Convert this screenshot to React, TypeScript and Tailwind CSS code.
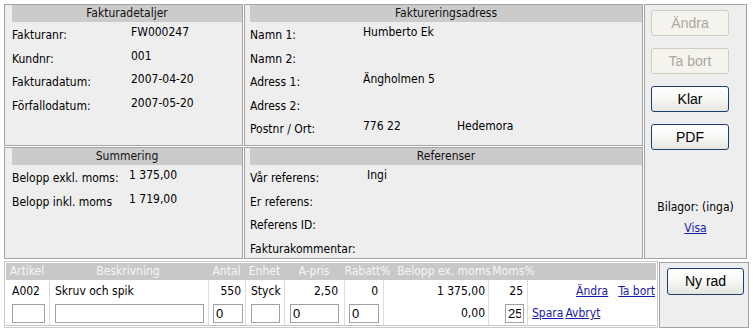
import React from 'react';

const sans = "font-['DejaVu_Sans_Condensed','DejaVu_Sans',sans-serif]";
const arial = "font-['Liberation_Sans',Arial,sans-serif]";

interface PanelProps {
    title: string;
    className?: string;
    children?: React.ReactNode;
}

function Panel({ title, className = '', children }: PanelProps) {
    return (
        <div className={`flex flex-col border border-[#a3a3a3] bg-[#eeeeee] ${className}`}>
            <div className="h-[17px] bg-[#cbcbcb] text-center leading-[17px] text-[#111]">{title}</div>
            <div className="flex flex-col pt-[2px]">{children}</div>
        </div>
    );
}

interface RowProps {
    label: string;
    value?: string;
    extra?: string;
    labelW: string;
    valueW?: string;
}

function Row({ label, value, extra, labelW, valueW = '' }: RowProps) {
    return (
        <div className="flex h-[23.5px] items-start whitespace-nowrap">
            <span className={`${labelW} shrink-0 leading-[23px]`}>{label}</span>
            {value && <span className={`${valueW} shrink-0 leading-[17px]`}>{value}</span>}
            {extra && <span className="leading-[17px]">{extra}</span>}
        </div>
    );
}

function XpButton({ label, disabled, className = '' }: { label: string; disabled?: boolean; className?: string }) {
    return (
        <button
            disabled={disabled}
            className={`${arial} flex items-center justify-center rounded-[3px] border text-[14px] ${
                disabled
                    ? 'border-[#cfcdc0] bg-[#f4f3ee] text-[#aca899]'
                    : 'border-[#1c3f6e] bg-gradient-to-b from-white via-[#f7f7f4] to-[#e6e5df] text-black'
            } ${className}`}
        >
            {label}
        </button>
    );
}

function Input({ value = '', className = '' }: { value?: string; className?: string }) {
    return (
        <input
            readOnly
            value={value}
            className={`${arial} h-[19px] border border-[#9aa3ab] bg-white px-[2px] text-[13px] leading-[17px] text-black outline-none ${className}`}
        />
    );
}

function Link({ children }: { children: React.ReactNode }) {
    return <a className="cursor-pointer text-[#1a1aa8] underline">{children}</a>;
}

export default function App() {
    return (
        <div className={`${sans} h-[329px] w-[753px] overflow-hidden bg-white pl-[4px] pt-[4px] text-[12px] text-black`}>
            {/* top area */}
            <div className="flex h-[255px] gap-[1px]">
                <div className="grid grid-cols-[239px_399px] grid-rows-[142px_112px] gap-[1px]">
                    <Panel title="Fakturadetaljer" className="pl-[7px]">
                        <Row label="Fakturanr:" value="FW000247" labelW="w-[119px]" />
                        <Row label="Kundnr:" value="001" labelW="w-[119px]" />
                        <Row label="Fakturadatum:" value="2007-04-20" labelW="w-[119px]" />
                        <Row label="Förfallodatum:" value="2007-05-20" labelW="w-[119px]" />
                    </Panel>
                    <Panel title="Faktureringsadress" className="pl-[5px]">
                        <Row label="Namn 1:" value="Humberto Ek" labelW="w-[113px]" />
                        <Row label="Namn 2:" labelW="w-[113px]" />
                        <Row label="Adress 1:" value="Ängholmen 5" labelW="w-[113px]" />
                        <Row label="Adress 2:" labelW="w-[113px]" />
                        <Row label="Postnr / Ort:" value="776 22" extra="Hedemora" labelW="w-[113px]" valueW="w-[94px]" />
                    </Panel>
                    <Panel title="Summering" className="pl-[7px]">
                        <Row label="Belopp exkl. moms:" value="1 375,00" labelW="w-[117px]" />
                        <Row label="Belopp inkl. moms" value="1 719,00" labelW="w-[117px]" />
                    </Panel>
                    <Panel title="Referenser" className="pl-[5px]">
                        <Row label="Vår referens:" value="Ingi" labelW="w-[117px]" />
                        <Row label="Er referens:" labelW="w-[117px]" />
                        <Row label="Referens ID:" labelW="w-[117px]" />
                        <Row label="Fakturakommentar:" labelW="w-[117px]" />
                    </Panel>
                </div>

                <div className="flex w-[103px] flex-col border border-[#a3a3a3] bg-[#eeeeee] pl-[6px] pt-[5px]">
                    <div className="flex flex-col gap-[12px]">
                        <XpButton label="Ändra" disabled className="h-[26px] w-[78px]" />
                        <XpButton label="Ta bort" disabled className="h-[26px] w-[78px]" />
                        <XpButton label="Klar" className="h-[26px] w-[78px]" />
                        <XpButton label="PDF" className="h-[26px] w-[78px]" />
                    </div>
                    <div className="mt-[49px] -ml-[6px] flex flex-col items-center leading-[16px]">
                        <span>Bilagor: (inga)</span>
                        <span className="mt-[5px]">
                            <Link>Visa</Link>
                        </span>
                    </div>
                </div>
            </div>

            {/* invoice rows */}
            <div className="mt-[2px] flex items-start gap-[1px]">
                <div className="flex h-[67px] w-[654px] flex-col border border-[#c9c9c9] p-[1px]">
                    <div className="flex h-[17px] bg-[#c8c8c8] leading-[17px] whitespace-nowrap text-[#f6f6f6]">
                        <span className="flex w-[42px] justify-center">Artikel</span>
                        <span className="flex w-[160px] justify-center">Beskrivning</span>
                        <span className="flex w-[37px] justify-center">Antal</span>
                        <span className="flex w-[39px] justify-center">Enhet</span>
                        <span className="flex w-[60px] justify-center">A-pris</span>
                        <span className="flex w-[47px] justify-center">Rabatt%</span>
                        <span className="flex w-[106px] justify-center">Belopp ex. moms</span>
                        <span className="flex w-[33px] justify-center">Moms%</span>
                    </div>
                    <div className="flex border-b border-[#c4c4c4] bg-white whitespace-nowrap">
                        <div className="flex w-[43px] flex-col">
                            <div className="h-[22px] pl-[6px] leading-[22px]">A002</div>
                            <div className="h-[23px] pl-[6px] pt-[2px]">
                                <Input className="w-[33px]" />
                            </div>
                        </div>
                        <div className="flex w-[159px] flex-col border-l border-[#dcdcdc]">
                            <div className="h-[22px] pl-[5px] leading-[22px]">Skruv och spik</div>
                            <div className="h-[23px] pl-[5px] pt-[2px]">
                                <Input className="w-[149px]" />
                            </div>
                        </div>
                        <div className="flex w-[37px] flex-col border-l border-[#dcdcdc]">
                            <div className="h-[22px] pr-[4px] text-right leading-[22px]">550</div>
                            <div className="h-[23px] pl-[4px] pt-[2px]">
                                <Input value="0" className="w-[30px]" />
                            </div>
                        </div>
                        <div className="flex w-[39px] flex-col border-l border-[#dcdcdc]">
                            <div className="h-[22px] pl-[5px] leading-[22px]">Styck</div>
                            <div className="h-[23px] pl-[5px] pt-[2px]">
                                <Input className="w-[29px]" />
                            </div>
                        </div>
                        <div className="flex w-[60px] flex-col border-l border-[#dcdcdc]">
                            <div className="h-[22px] pr-[6px] text-right leading-[22px]">2,50</div>
                            <div className="h-[23px] pl-[5px] pt-[2px]">
                                <Input value="0" className="w-[49px]" />
                            </div>
                        </div>
                        <div className="flex w-[39px] flex-col border-l border-[#dcdcdc]">
                            <div className="h-[22px] pr-[5px] text-right leading-[22px]">0</div>
                            <div className="h-[23px] pl-[4px] pt-[2px]">
                                <Input value="0" className="w-[30px]" />
                            </div>
                        </div>
                        <div className="flex w-[105px] flex-col border-l border-[#dcdcdc]">
                            <div className="h-[22px] pr-[3px] text-right leading-[22px]">1 375,00</div>
                            <div className="h-[23px] pr-[3px] text-right leading-[23px]">0,00</div>
                        </div>
                        <div className="flex w-[39px] flex-col border-l border-[#dcdcdc]">
                            <div className="h-[22px] pr-[4px] text-right leading-[22px]">25</div>
                            <div className="flex h-[23px] justify-end pr-[3px] pt-[2px]">
                                <Input value="25" className="w-[19px]" />
                            </div>
                        </div>
                        <div className="flex w-[129px] flex-col border-l border-[#dcdcdc]">
                            <div className="flex h-[22px] justify-end gap-[10px] pr-[1px] leading-[22px]">
                                <Link>Ändra</Link>
                                <Link>Ta bort</Link>
                            </div>
                            <div className="flex h-[23px] gap-[2px] pl-[4px] leading-[23px]">
                                <Link>Spara</Link>
                                <Link>Avbryt</Link>
                            </div>
                        </div>
                    </div>
                </div>

                <div className="mt-[1px] h-[66px] w-[90px] border border-[#a3a3a3] bg-[#eeeeee] pl-[7px] pt-[5px]">
                    <XpButton label="Ny rad" className="h-[27px] w-[77px]" />
                </div>
            </div>
        </div>
    );
}
